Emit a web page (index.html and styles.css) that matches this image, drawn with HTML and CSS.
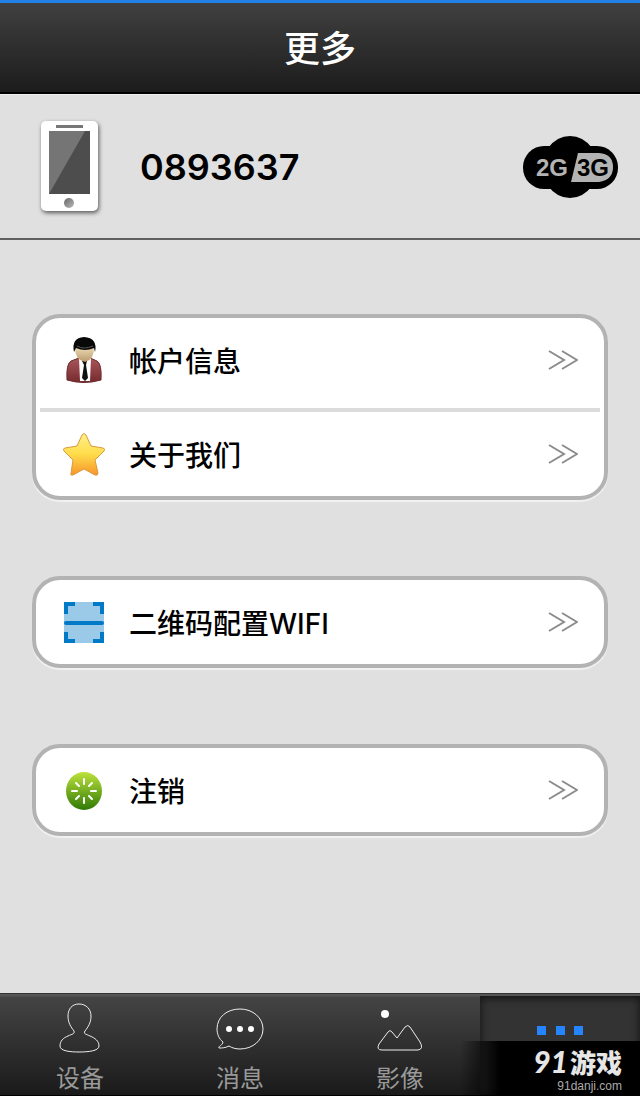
FILE: index.html
```html
<!DOCTYPE html>
<html lang="zh-CN">
<head>
    <meta charset="UTF-8">
    <meta name="viewport" content="width=device-width, initial-scale=1">
    <title>更多</title>
    <link rel="stylesheet" href="styles.css">
</head>
<body>
<header class="header">
    <h1>更多</h1>
</header>
<section class="device">
    <svg class="phone" viewBox="0 0 60 92">
        <defs>
            <linearGradient id="home" x1="0" y1="0" x2="1" y2="1">
                <stop offset="0" stop-color="#666"/>
                <stop offset="1" stop-color="#bbb"/>
            </linearGradient>
        </defs>
        <rect x="1" y="0" width="57" height="90" rx="5" fill="#fff"/>
        <rect x="16" y="4" width="27" height="3" fill="#777"/>
        <rect x="9" y="10" width="41" height="63" fill="#4d4d4d"/>
        <path d="M9 10H45L9 73Z" fill="#757575"/>
        <circle cx="29" cy="82" r="5" fill="url(#home)"/>
    </svg>
    <span class="number">0893637</span>
    <svg class="network" viewBox="0 0 96 62">
        <rect x="1" y="10" width="95" height="43" rx="21"/>
        <path d="M26 12Q35 0 48 0T70 12V50Q61 62 48 62T26 50Z"/>
        <path d="M56 17H77Q91 18 91 31T77 46H49Z" fill="#b3b3b3"/>
        <text x="14" y="40" fill="#b3b3b3">2G</text>
        <text x="55" y="40">3G</text>
    </svg>
</section>
<main class="content">
    <div class="card">
        <a class="row" href="#">
            <svg class="icon" viewBox="0 0 42 48">
                <defs>
                    <linearGradient id="coat" x1="0" y1="0" x2="0" y2="1">
                        <stop offset="0" stop-color="#a8575a"/>
                        <stop offset="1" stop-color="#762a2e"/>
                    </linearGradient>
                    <linearGradient id="face" x1="0" y1="0" x2="0" y2="1">
                        <stop offset="0" stop-color="#ead6b0"/>
                        <stop offset="1" stop-color="#b99a6c"/>
                    </linearGradient>
                </defs>
                <path d="M4 44Q3 28 8 25L16 22H27L34 25Q39 28 38 44Q21 49 4 44Z" fill="url(#coat)" stroke="#6d2a2d"/>
                <path d="M16 22L17 45H27L28 22Z" fill="#fff"/>
                <path d="M19 25H24L23 29L25 42L22 45L19 42L21 29Z" fill="#111"/>
                <path d="M12 12H31Q31 24 22 26Q12 24 12 12Z" fill="url(#face)"/>
                <path d="M11 16Q8 2 21 1Q35 2 32 16L31 12Q22 16 13 12Z" fill="#080808"/>
                <path d="M14 10Q21 14 30 10" fill="none" stroke="#555"/>
            </svg>
            <span class="label">帐户信息</span>
            <svg class="arrow" viewBox="0 0 30 20"><path d="M1 1L16 10L1 19M14 1L29 10L14 19"/></svg>
        </a>
        <a class="row" href="#">
            <svg class="icon" viewBox="0 0 42 48">
                <defs>
                    <linearGradient id="star" x1="0" y1="0" x2="0" y2="1">
                        <stop offset="0" stop-color="#fff08a"/>
                        <stop offset=".5" stop-color="#ffdc4a"/>
                        <stop offset="1" stop-color="#f7942c"/>
                    </linearGradient>
                </defs>
                <path d="M19 5Q21 2 23 5L28 16L40 18Q43 19 41 21L32 30L35 43Q35 46 32 45L21 39L10 45Q7 46 8 43L10 30L1 21Q-1 19 2 18L14 16Z" fill="url(#star)" stroke="#d99a3e"/>
            </svg>
            <span class="label">关于我们</span>
            <svg class="arrow" viewBox="0 0 30 20"><path d="M1 1L16 10L1 19M14 1L29 10L14 19"/></svg>
        </a>
    </div>
    <div class="card">
        <a class="row" href="#">
            <svg class="icon" viewBox="0 0 42 48">
                <rect x="1" y="4" width="40" height="41" fill="#9bcae8"/>
                <path d="M3 16V6H12M30 6H39V16M39 34V43H30M12 43H3V34" fill="none" stroke="#0079c7" stroke-width="4"/>
                <path d="M3 25H39" stroke="#0079c7" stroke-width="4" stroke-linecap="round"/>
            </svg>
            <span class="label">二维码配置WIFI</span>
            <svg class="arrow" viewBox="0 0 30 20"><path d="M1 1L16 10L1 19M14 1L29 10L14 19"/></svg>
        </a>
    </div>
    <div class="card">
        <a class="row" href="#">
            <svg class="icon" viewBox="0 0 42 48">
                <defs>
                    <linearGradient id="green" x1="0" y1="0" x2="0" y2="1">
                        <stop offset="0" stop-color="#bde23c"/>
                        <stop offset="1" stop-color="#2f7a05"/>
                    </linearGradient>
                </defs>
                <ellipse cx="21" cy="25" rx="18" ry="19" fill="url(#green)"/>
                <path d="M21 13V18M21 32V37M9 25H14M28 25H33M13 17L16 20M26 30L29 33M29 17L26 20M16 30L13 33" stroke="#fff" stroke-width="2" stroke-linecap="round"/>
            </svg>
            <span class="label">注销</span>
            <svg class="arrow" viewBox="0 0 30 20"><path d="M1 1L16 10L1 19M14 1L29 10L14 19"/></svg>
        </a>
    </div>
</main>
<nav class="tabs">
    <a class="tab" href="#">
        <svg viewBox="0 0 48 54"><path d="M23 3C16 3 12 8 12 15C12 22 15 26 18 30C19 33 16 33 12 35C7 37 4 40 4 45C4 50 14 51 23 51S43 50 43 45C43 40 39 37 34 35C30 33 27 33 29 30C32 26 35 22 35 15C35 8 30 3 23 3Z"/></svg>
        <span>设备</span>
    </a>
    <a class="tab" href="#">
        <svg viewBox="0 0 48 54">
            <path d="M7 41C3 38 1 33 1 28C1 16 11 8 24 8S47 17 47 28S37 48 24 48C20 48 16 47 13 45C9 47 6 47 3 47C2 45 7 44 7 41Z"/>
            <g class="dot"><circle cx="13" cy="28" r="3"/><circle cx="24" cy="28" r="3"/><circle cx="35" cy="28" r="3"/></g>
        </svg>
        <span>消息</span>
    </a>
    <a class="tab" href="#">
        <svg viewBox="0 0 48 54">
            <path d="M3 43L12 31Q14 28 16 31L21 37L29 26Q32 23 34 26L44 41Q48 48 42 49H6Q0 49 3 43Z"/>
            <ellipse class="dot" cx="9" cy="13" rx="4" ry="4"/>
        </svg>
        <span>影像</span>
    </a>
    <a class="tab active" href="#" aria-label="更多">
        <svg viewBox="0 0 48 54"><path d="M1 25h9v9h-9zM20 25h9v9h-9zM38 25h9v9h-9z"/></svg>
    </a>
    <div class="watermark">
        <div class="brand"><b>91</b>游戏</div>
        <div class="site">91danji.com</div>
    </div>
</nav>
</body>
</html>
```

FILE: styles.css
```css
html,body{
    margin: 0;
    padding: 0;
}
body{
    display: flex;
    flex-direction: column;
    min-height: 100vh;
    font-family: Inter,"Noto Sans CJK SC",sans-serif;
    background-color: #e0e0e0;
    color: #000;
}
a{
    color: inherit;
    text-decoration: none;
}
.header{
    box-sizing: border-box;
    height: 94px;
    border-top: 3px solid #2380e6;
    border-bottom: 2px solid #000;
    background: linear-gradient(#404040,#1c1c1c);
}
.header h1{
    margin: 0;
    font-size: 36px;
    font-weight: 500;
    line-height: 92px;
    text-align: center;
    color: #fff;
}
.device{
    display: flex;
    align-items: center;
    height: 143px;
    padding: 0 22px 0 40px;
    border-top: 1px solid #f0f0f0;
    border-bottom: 2px solid #606060;
}
.phone{
    width: 60px;
    height: 92px;
    filter: drop-shadow(1px 2px 2px rgba(0,0,0,.6));
}
.number{
    flex: 1;
    margin-left: 40px;
    font-size: 36px;
    font-weight: 600;
}
.network{
    width: 96px;
    height: 62px;
}
.network text{
    font: bold 24px "Liberation Sans",Arial,sans-serif;
}
.content{
    flex: 1;
    display: flex;
    flex-direction: column;
    gap: 76px;
    padding: 74px 32px;
}
.card{
    border: 4px solid #b3b3b3;
    border-radius: 28px;
    background-color: #fff;
    box-shadow: 0 2px 1px #f2f2f2;
}
.row{
    display: flex;
    align-items: center;
    height: 84px;
    margin: 0 4px;
    padding: 0 22px 0 23px;
}
.row + .row{
    border-top: 4px solid #dcdcdc;
}
.row:not(:last-child){
    padding-bottom: 6px;
}
.icon{
    width: 42px;
    height: 48px;
}
.label{
    flex: 1;
    margin-left: 24px;
    font-size: 28px;
    font-weight: 500;
}
.arrow{
    width: 30px;
    height: 20px;
    fill: none;
    stroke: #8c8c8c;
    stroke-width: 2;
}
.tabs{
    position: relative;
    display: flex;
    box-sizing: border-box;
    height: 103px;
    border-top: 1px solid #333;
    border-bottom: 1px solid #000;
    background: linear-gradient(#555 2px,#444 3px,#1a1a1a);
}
.tab{
    flex: 1;
    display: flex;
    flex-direction: column;
    align-items: center;
    padding-top: 7px;
    color: #999;
    font-size: 24px;
    line-height: 32px;
}
.tab svg{
    flex-shrink: 0;
    width: 48px;
    height: 54px;
    margin-bottom: 8px;
    fill: none;
    stroke: #eee;
}
.tab .dot{
    fill: #fff;
    stroke: none;
}
.tab.active{
    margin-top: 2px;
    padding-top: 5px;
    background-color: #333;
    box-shadow: inset 0 2px 8px #111;
}
.tab.active svg{
    fill: #2485ff;
    stroke: none;
}
.watermark{
    position: absolute;
    right: 0;
    bottom: 0;
    box-sizing: border-box;
    width: 180px;
    height: 54px;
    padding: 6px 18px 0 0;
    background: linear-gradient(to right,transparent,#000 40px);
    color: #e6e6e6;
    text-align: right;
}
.brand{
    font-size: 26px;
    font-weight: 900;
    line-height: 28px;
}
.brand b{
    margin-right: 2px;
    font-family: Lato,sans-serif;
    font-size: 30px;
    font-style: italic;
    font-weight: 900;
}
.site{
    color: #aaa;
    font: 12px/16px "Liberation Sans",Arial,sans-serif;
}
```
